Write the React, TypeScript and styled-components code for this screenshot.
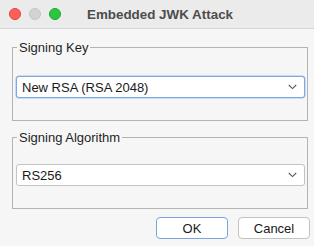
import * as React from 'react';
import styled, { createGlobalStyle } from 'styled-components';

const GlobalStyle = createGlobalStyle`
  html, body {
    margin: 0;
    padding: 0;
    background: #f6f6f6;
  }
  body {
    font-family: 'Liberation Sans', Arial, sans-serif;
    -webkit-font-smoothing: antialiased;
  }
`;

const Window = styled.div`
  width: 314px;
  height: 246px;
  background: #f6f6f6;
  display: flex;
  flex-direction: column;
  overflow: hidden;
`;

const TitleBar = styled.div`
  height: 28px;
  display: flex;
  align-items: center;
  background: #ebebeb;
  border-bottom: 1px solid #d6d6d6;
`;

const Lights = styled.div`
  display: flex;
  gap: 8px;
  padding-left: 9px;
`;

const Light = styled.span<{ $color: string; $edge: string }>`
  width: 12px;
  height: 12px;
  border-radius: 50%;
  box-sizing: border-box;
  background: ${(p) => p.$color};
  border: 0.5px solid ${(p) => p.$edge};
`;

const Title = styled.div`
  flex: 1;
  margin-right: 55px;
  text-align: center;
  font-size: 13.4px;
  font-weight: bold;
  color: #4d4d4d;
`;

const Body = styled.div`
  flex: 1;
  display: flex;
  flex-direction: column;
  padding: 11px 6px 0 12px;
`;

const Group = styled.fieldset<{ $top?: number; $padTop?: number }>`
  margin: ${(p) => p.$top ?? 0}px 0 0 0;
  padding: ${(p) => p.$padTop ?? 21}px 2px 22px 3px;
  border: 1px solid #b3b3b3;
  width: 296px;
  box-sizing: border-box;
  min-width: 0;
`;

const Legend = styled.legend`
  padding: 0 2px 0 2px;
  margin-left: 1px;
  font-size: 13px;
  line-height: 15px;
  color: #1f1f1f;
`;

const Select = styled.div<{ $focused?: boolean }>`
  height: 22px;
  box-sizing: border-box;
  display: flex;
  align-items: center;
  justify-content: space-between;
  padding: 0 7px 0 5px;
  background: #ffffff;
  border: 1px solid ${(p) => (p.$focused ? '#7ea9e1' : '#c3c3c3')};
  box-shadow: ${(p) => (p.$focused ? '0 0 0 0.5px #9fc0ea' : 'none')};
  border-radius: 3px;
  font-size: 13px;
  color: #1a1a1a;
`;

const Chevron = () => (
  <svg width="9" height="6" viewBox="0 0 9 6">
    <polyline points="0.8,1 4.5,4.6 8.2,1" fill="none" stroke="#5a5a5a" strokeWidth="1.1" />
  </svg>
);

const Buttons = styled.div`
  display: flex;
  justify-content: flex-end;
  gap: 10px;
  margin-top: 8px;
  margin-right: -2px;
`;

const Button = styled.button<{ $primary?: boolean }>`
  width: 72px;
  height: 22px;
  padding: 0;
  background: #ffffff;
  border: 1px solid ${(p) => (p.$primary ? '#78a5e0' : '#c2c2c2')};
  border-radius: 4px;
  font-family: 'Liberation Sans', Arial, sans-serif;
  font-size: 13px;
  color: #1a1a1a;
`;

export default function App() {
  return (
    <>
      <GlobalStyle />
      <Window>
        <TitleBar>
          <Lights>
            <Light $color="#fe5f57" $edge="#e0443e" />
            <Light $color="#d3d3d3" $edge="#c4c4c4" />
            <Light $color="#2ac73f" $edge="#1ea831" />
          </Lights>
          <Title>Embedded JWK Attack</Title>
        </TitleBar>
        <Body>
          <Group>
            <Legend>Signing Key</Legend>
            <Select $focused>
              <span>New RSA (RSA 2048)</span>
              <Chevron />
            </Select>
          </Group>
          <Group $top={9} $padTop={19}>
            <Legend>Signing Algorithm</Legend>
            <Select>
              <span>RS256</span>
              <Chevron />
            </Select>
          </Group>
          <Buttons>
            <Button $primary>OK</Button>
            <Button>Cancel</Button>
          </Buttons>
        </Body>
      </Window>
    </>
  );
}
